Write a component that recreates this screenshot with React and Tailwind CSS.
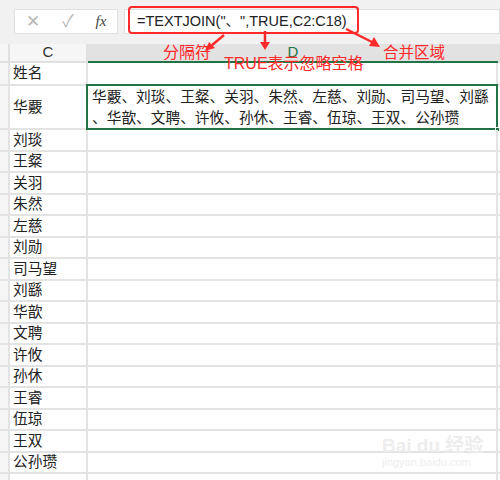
import React from "react";

const names = ["刘琰", "王粲", "关羽", "朱然", "左慈", "刘勋", "司马望", "刘繇", "华歆", "文聘", "许攸", "孙休", "王睿", "伍琼", "王双", "公孙瓒"];

const cjk = "font-['Liberation_Sans','Noto_Sans_CJK_SC',sans-serif]";

const Row = ({ h, name, children }) => (
  <div className={`flex border-b-2 border-[#e3e3e3] ${h}`}>
    <div className="w-[10px] shrink-0 bg-[#f6f6f6] border-r-2 border-[#e3e3e3]" />
    <div className="w-[78px] shrink-0 border-r-2 border-[#e3e3e3] flex items-center pl-[3px] text-[14.7px] text-[#222]">
      {name}
    </div>
    <div className="w-[410px] shrink-0 border-r-2 border-[#e3e3e3] relative">{children}</div>
    <div className="flex-1" />
  </div>
);

export default function App() {
  return (
    <div className={`w-[500px] h-[480px] overflow-hidden bg-white relative ${cjk}`}>
      {/* formula bar */}
      <div className="h-[44px] bg-[#f1f1f1] flex pt-[9px]">
        <div className="ml-[14px] w-[104px] h-[25px] bg-white border border-[#e0e0e0] flex items-center text-[#b8b8b8]">
          <span className="w-[36px] text-center text-[17px]">✕</span>
          <span className="w-[34px] text-center text-[17px]">✓</span>
          <span className="w-[32px] text-center text-[15px] text-[#444] italic font-['Liberation_Serif',serif]">fx</span>
        </div>
        <div className="ml-[6px] flex-1 h-[25px] bg-white border border-[#e0e0e0] flex items-center pl-[12px] text-[14.5px] text-[#222]">
          =TEXTJOIN("、",TRUE,C2:C18)
        </div>
      </div>

      {/* column headers */}
      <div className="flex h-[19px]">
        <div className="w-[10px] bg-[#f6f6f6] border-r-2 border-b-2 border-[#e0e0e0]" />
        <div className="w-[78px] bg-[#f6f6f6] border-r-2 border-b-2 border-[#e0e0e0] flex items-center justify-center text-[15px] text-[#333]">
          C
        </div>
        <div className="w-[410px] bg-[#e2e2e2] border-b-2 border-[#217346] flex items-center justify-center text-[15px] text-[#217346]">
          D
        </div>
        <div className="flex-1 bg-[#f6f6f6] border-l-2 border-b-2 border-[#e0e0e0]" />
      </div>

      {/* rows */}
      <Row h="h-[23px]" name="姓名" />
      <Row h="h-[44px]" name="华覈">
        <div className="absolute -left-[2px] -top-[2px] w-[412px] h-[46px] border-2 border-[#217346] pl-[4px] pt-[1px] text-[14.7px] leading-[21px] text-[#222] whitespace-nowrap">
          <div>华覈、刘琰、王粲、关羽、朱然、左慈、刘勋、司马望、刘繇</div>
          <div>、华歆、文聘、许攸、孙休、王睿、伍琼、王双、公孙瓒</div>
          <div className="absolute -right-[4px] -bottom-[4px] w-[5px] h-[5px] bg-[#217346] border border-white" />
        </div>
      </Row>
      {names.map((n) => (
        <Row key={n} h="h-[21.5px]" name={n} />
      ))}
      <Row h="h-[21.5px]" name="" />

      {/* annotations */}
      <div className="absolute left-[128px] top-[6px] w-[231px] h-[28px] border-[2.5px] border-[#ff2a2a] rounded-[4px]" />
      <div className="absolute left-[163px] top-[45px] text-[16px] text-[#ff2a2a] leading-none">分隔符</div>
      <div className="absolute left-[224px] top-[56px] text-[16px] text-[#ff2a2a] leading-none">TRUE表示忽略空格</div>
      <div className="absolute left-[383px] top-[45px] text-[15.5px] text-[#ff2a2a] leading-none">合并区域</div>
      <svg className="absolute left-0 top-0 pointer-events-none" width="500" height="480">
        <g stroke="#ff2a2a" strokeWidth="2.5" fill="#ff2a2a">
          <line x1="224" y1="35" x2="211" y2="46" />
          <polygon points="205,51 209,42 215,48" stroke="none" />
          <line x1="265" y1="31" x2="265" y2="43" />
          <polygon points="265,50 260,42 270,42" stroke="none" />
          <line x1="346" y1="29" x2="372" y2="42" />
          <polygon points="380,47 369,46 374,37" stroke="none" />
        </g>
      </svg>

      {/* watermark */}
      <div className="absolute left-[382px] top-[436px] text-[#ededed] leading-none pointer-events-none">
        <div className="text-[19px] font-bold">Bai du 经验</div>
        <div className="text-[11px] mt-[2px]">jingyan.baidu.com</div>
      </div>
    </div>
  );
}
